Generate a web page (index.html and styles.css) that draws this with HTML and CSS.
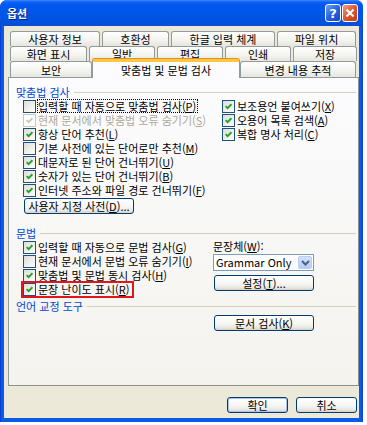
FILE: index.html
```html
<!DOCTYPE html>
<html lang="ko">
<head>
    <meta charset="UTF-8">
    <title>옵션</title>
    <link rel="stylesheet" href="styles.css">
</head>
<body>
<div class="window">
    <div class="titlebar">
        <span class="title">옵션</span>
        <span class="cap-btn help">?</span>
        <span class="cap-btn close">
            <svg width="10" height="10" viewBox="0 0 10 10"><path d="M1.5 1.5 L8.5 8.5 M8.5 1.5 L1.5 8.5" stroke="#fff" stroke-width="2.2"/></svg>
        </span>
    </div>

    <div class="frame">
        <div class="tabs">
            <div class="tab-row">
                <div class="tab" style="width:90px">사용자 정보</div>
                <div class="tab" style="width:67px">호환성</div>
                <div class="tab" style="width:104px">한글 입력 체계</div>
                <div class="tab" style="width:79px">파일 위치</div>
            </div>
            <div class="tab-row">
                <div class="tab" style="width:77px">화면 표시</div>
                <div class="tab" style="width:66px">일반</div>
                <div class="tab" style="width:66px">편집</div>
                <div class="tab" style="width:66px">인쇄</div>
                <div class="tab" style="width:64px">저장</div>
            </div>
            <div class="tab-row last">
                <div class="tab" style="width:82px">보안</div>
                <div class="tab selected" style="width:148px">맞춤법 및 문법 검사</div>
                <div class="tab" style="width:116px">변경 내용 추적</div>
            </div>
        </div>

        <div class="panel">
            <div class="section-head">맞춤법 검사</div>
            <div class="spell">
                <div class="col-left">
                    <div class="check-row"><span class="cb"></span><span class="focus">입력할 때 자동으로 맞춤법 검사(<u>P</u>)</span></div>
                    <div class="check-row disabled"><span class="cb on"><svg viewBox="0 0 7 7"><path d="M0.6 3.2 L2.6 5.2 L6.4 1.2"/></svg></span>현재 문서에서 맞춤법 오류 숨기기(<u>S</u>)</div>
                    <div class="check-row"><span class="cb on"><svg viewBox="0 0 7 7"><path d="M0.6 3.2 L2.6 5.2 L6.4 1.2"/></svg></span>항상 단어 추천(<u>L</u>)</div>
                    <div class="check-row"><span class="cb"></span>기본 사전에 있는 단어로만 추천(<u>M</u>)</div>
                    <div class="check-row"><span class="cb on"><svg viewBox="0 0 7 7"><path d="M0.6 3.2 L2.6 5.2 L6.4 1.2"/></svg></span>대문자로 된 단어 건너뛰기(<u>U</u>)</div>
                    <div class="check-row"><span class="cb on"><svg viewBox="0 0 7 7"><path d="M0.6 3.2 L2.6 5.2 L6.4 1.2"/></svg></span>숫자가 있는 단어 건너뛰기(<u>B</u>)</div>
                    <div class="check-row"><span class="cb on"><svg viewBox="0 0 7 7"><path d="M0.6 3.2 L2.6 5.2 L6.4 1.2"/></svg></span>인터넷 주소와 파일 경로 건너뛰기(<u>F</u>)</div>
                </div>
                <div class="col-right">
                    <div class="check-row"><span class="cb on"><svg viewBox="0 0 7 7"><path d="M0.6 3.2 L2.6 5.2 L6.4 1.2"/></svg></span>보조용언 붙여쓰기(<u>X</u>)</div>
                    <div class="check-row"><span class="cb on"><svg viewBox="0 0 7 7"><path d="M0.6 3.2 L2.6 5.2 L6.4 1.2"/></svg></span>오용어 목록 검색(<u>A</u>)</div>
                    <div class="check-row"><span class="cb on"><svg viewBox="0 0 7 7"><path d="M0.6 3.2 L2.6 5.2 L6.4 1.2"/></svg></span>복합 명사 처리(<u>C</u>)</div>
                </div>
            </div>
            <button class="btn dict-btn">사용자 지정 사전(<u>D</u>)...</button>

            <div class="section-head grammar-head">문법</div>
            <div class="grammar">
                <div class="col-left">
                    <div class="check-row"><span class="cb on"><svg viewBox="0 0 7 7"><path d="M0.6 3.2 L2.6 5.2 L6.4 1.2"/></svg></span>입력할 때 자동으로 문법 검사(<u>G</u>)</div>
                    <div class="check-row"><span class="cb"></span>현재 문서에서 문법 오류 숨기기(<u>I</u>)</div>
                    <div class="check-row"><span class="cb on"><svg viewBox="0 0 7 7"><path d="M0.6 3.2 L2.6 5.2 L6.4 1.2"/></svg></span>맞춤법 및 문법 동시 검사(<u>H</u>)</div>
                    <div class="check-row"><span class="marked"><span class="cb on"><svg viewBox="0 0 7 7"><path d="M0.6 3.2 L2.6 5.2 L6.4 1.2"/></svg></span>문장 난이도 표시(<u>R</u>)</span></div>
                </div>
                <div class="col-right">
                    <div class="field-label">문장체(<u>W</u>):</div>
                    <div class="select">
                        <span class="select-value">Grammar Only</span>
                        <span class="drop">
                            <svg width="9" height="6" viewBox="0 0 9 6"><path d="M1 1 L4.5 4.5 L8 1" fill="none" stroke="#4D6185" stroke-width="2"/></svg>
                        </span>
                    </div>
                    <button class="btn setup-btn">설정(<u>T</u>)...</button>
                </div>
            </div>

            <div class="section-head tools-head">언어 교정 도구</div>
            <button class="btn check-btn">문서 검사(<u>K</u>)</button>
        </div>

        <div class="dialog-btns">
            <button class="btn default">확인</button>
            <button class="btn">취소</button>
        </div>
    </div>
</div>
</body>
</html>
```

FILE: styles.css
```css
body {
    margin: 0;
    background: #fff;
    font-family: "Noto Sans CJK KR", "Noto Sans", sans-serif;
    font-size: 11px;
    line-height: 13px;
    color: #000;
}

.window {
    width: 363px;
    height: 422px;
    background: linear-gradient(90deg, #0A3BD0, #0B5AEA 2px, #0B5AEA 361px, #0A3BD0);
    border-radius: 7px 7px 0 0;
    display: flex;
    flex-direction: column;
    overflow: hidden;
}

.titlebar {
    height: 26px;
    flex: none;
    display: flex;
    align-items: center;
    padding: 0 5px 0 7px;
    background: linear-gradient(#3D8CF5 0, #0F62FA 2px, #0058EE 5px, #0055E6 55%, #0052DD 85%, #0A4CD2 100%);
}
.title {
    flex: 1;
    color: #fff;
    font-weight: bold;
    font-size: 11px;
    text-shadow: 1px 1px #0A1E80;
}
.cap-btn {
    width: 16px;
    height: 18px;
    box-sizing: border-box;
    border: 1px solid #fff;
    border-radius: 3px;
    margin-left: 1px;
    display: flex;
    align-items: center;
    justify-content: center;
    color: #fff;
    font-family: "DejaVu Sans", sans-serif;
    font-weight: bold;
    font-size: 13px;
}
.help {
    background: linear-gradient(135deg, #6FA0F8, #2663E0 50%, #1448C8);
}
.close {
    background: linear-gradient(135deg, #F2A080, #E0562E 50%, #C03A14);
}

.frame {
    flex: 1;
    margin: 0 4px 4px;
    background: #ECE9D8;
    padding-top: 5px;
}

.tabs {
    padding-left: 6px;
}
.tab-row {
    display: flex;
    gap: 2px;
    height: 15px;
}
.tab-row.last {
    height: 16px;
    gap: 0;
}
.tab {
    height: 100%;
    box-sizing: border-box;
    border: 1px solid #919B9C;
    border-bottom: none;
    border-radius: 3px 3px 0 0;
    background: linear-gradient(#FFFFFF, #F3F3EF 60%, #E6E5DE);
    display: flex;
    align-items: center;
    justify-content: center;
    line-height: 12px;
    white-space: nowrap;
}
.tab.selected {
    position: relative;
    z-index: 1;
    margin-top: -2px;
    height: calc(100% + 3px);
    background: #FCFCFE;
    border-top: 3px solid #FFC83C;
    box-shadow: 0 -1px 0 #E68B2C;
    padding-bottom: 1px;
}

.panel {
    margin-left: 4px;
    width: 351px;
    height: 309px;
    box-sizing: border-box;
    border: 1px solid #919B9C;
    border-right-color: #8A9192;
    border-bottom-color: #8A9192;
    background: linear-gradient(#FCFCFE, #F4F3EE);
    padding: 8px 2px 0 7px;
}

.section-head {
    height: 13px;
    display: flex;
    align-items: center;
    gap: 4px;
    color: #0046D5;
    white-space: nowrap;
}
.section-head::after {
    content: "";
    flex: 1;
    border-top: 1px solid #D0D0BF;
}

.spell,
.grammar {
    display: flex;
    padding-left: 7px;
}
.spell .col-left {
    width: 199px;
}
.grammar .col-left {
    width: 190px;
}
.grammar .col-right {
    width: 101px;
}

.check-row {
    height: 14px;
    display: flex;
    align-items: center;
    white-space: nowrap;
}
.check-row.disabled {
    color: #ACA899;
}
.cb {
    width: 13px;
    height: 13px;
    flex: none;
    box-sizing: border-box;
    border: 1px solid #1C5180;
    background: linear-gradient(135deg, #DCDCD7, #FFFFFF);
    margin-right: 2px;
    display: flex;
    align-items: center;
    justify-content: center;
}
.cb svg {
    width: 7px;
    height: 7px;
    fill: none;
    stroke: #21A121;
    stroke-width: 1.8;
}
.disabled .cb {
    border-color: #CAC8BB;
    background: #fff;
}
.disabled .cb svg {
    stroke: #CAC8BB;
}
.focus {
    border: 1px dotted #000;
    height: 14px;
    box-sizing: border-box;
    display: flex;
    align-items: center;
    padding: 0 1px 0 0;
    margin-left: -1px;
}
.marked {
    display: flex;
    align-items: center;
    outline: 2px solid #E3141C;
    outline-offset: 0;
    padding-right: 3px;
}

.btn {
    height: 16px;
    box-sizing: border-box;
    border: 1px solid #003C74;
    border-radius: 3px;
    background: linear-gradient(#FFFFFF, #F6F6F3 55%, #E8E6DE 85%, #D6D0C5);
    font: inherit;
    color: #000;
    padding: 0;
    display: flex;
    align-items: center;
    justify-content: center;
    line-height: 12px;
    white-space: nowrap;
}
.dict-btn {
    width: 110px;
    margin: 1px 0 0 8px;
}

.grammar-head {
    margin-top: 13px;
}
.field-label {
    height: 13px;
    display: flex;
    align-items: center;
    white-space: nowrap;
}
.select {
    margin-top: 1px;
    height: 17px;
    box-sizing: border-box;
    border: 1px solid #7F9DB9;
    background: #fff;
    display: flex;
}
.select-value {
    flex: 1;
    padding-left: 2px;
    font-size: 11px;
    line-height: 15px;
    white-space: nowrap;
}
.drop {
    width: 14px;
    margin: 1px;
    border-radius: 2px;
    background: linear-gradient(#D5E2FD, #B6CBF8);
    border: 1px solid #B9CDF7;
    box-sizing: border-box;
    display: flex;
    align-items: center;
    justify-content: center;
}
.setup-btn {
    width: 100px;
    margin: 4px 0 0 1px;
}

.tools-head {
    margin-top: 4px;
}
.check-btn {
    width: 100px;
    margin: 2px 0 0 198px;
}

.dialog-btns {
    display: flex;
    justify-content: flex-end;
    gap: 8px;
    padding-right: 2px;
    margin-top: 11px;
}
.dialog-btns .btn {
    width: 61px;
}
.dialog-btns .default {
    box-shadow: inset 0 0 0 1px #A9C2F0;
}
```
